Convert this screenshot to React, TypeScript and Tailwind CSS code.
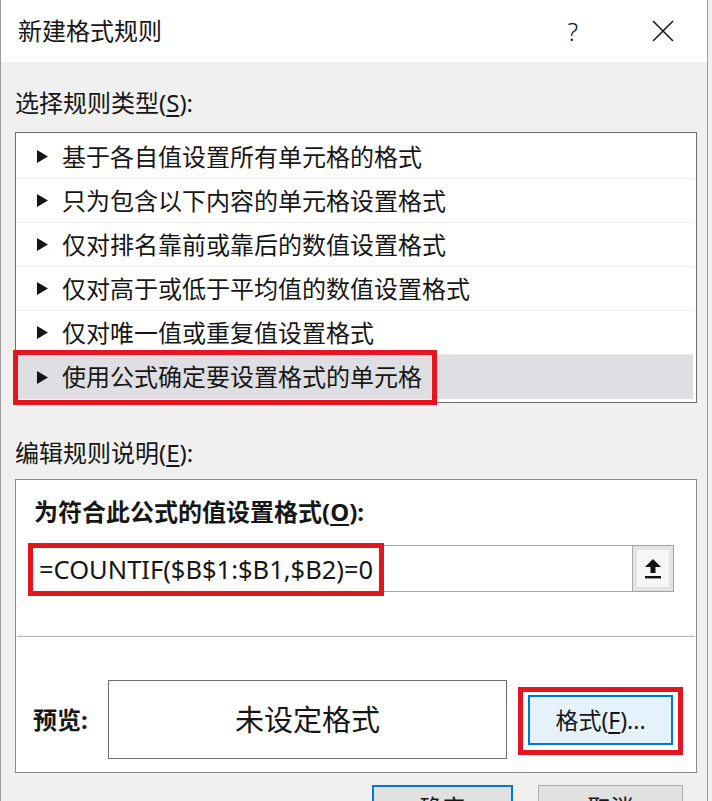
import React from "react";

const rules = [
  "基于各自值设置所有单元格的格式",
  "只为包含以下内容的单元格设置格式",
  "仅对排名靠前或靠后的数值设置格式",
  "仅对高于或低于平均值的数值设置格式",
  "仅对唯一值或重复值设置格式",
  "使用公式确定要设置格式的单元格",
];

function Triangle() {
  return (
    <svg width="11" height="13" viewBox="0 0 11 13" className="shrink-0">
      <polygon points="0,0 11,6.5 0,13" fill="#141414" />
    </svg>
  );
}

function CloseIcon() {
  return (
    <svg width="22" height="22" viewBox="0 0 22 22">
      <path d="M1 1 L21 21 M21 1 L1 21" stroke="#1a1a1a" strokeWidth="1.6" fill="none" />
    </svg>
  );
}

function UploadIcon() {
  return (
    <svg width="18" height="22" viewBox="0 0 18 22">
      <polygon points="9,1 17,9 11.5,9 11.5,15 6.5,15 6.5,9 1,9" fill="#111" />
      <rect x="1" y="18" width="16" height="2.4" fill="#111" />
    </svg>
  );
}

export default function App() {
  return (
    <div className="w-[712px] h-[801px] overflow-hidden bg-[#f0f0f0] font-['Noto_Sans','Noto_Sans_CJK_SC',sans-serif] text-[#161616]">
      <div className="w-[708px] h-full border-l border-r border-[#9a9a9a] flex flex-col">
        {/* Title bar */}
        <div className="h-[62px] shrink-0 bg-white flex items-center pl-[17px]">
          <span className="text-[24px] leading-[28px]">新建格式规则</span>
          <span className="ml-auto mr-[74px] text-[25px] leading-[28px] font-light">?</span>
          <span className="mr-[33px] flex items-center">
            <CloseIcon />
          </span>
        </div>

        {/* Body */}
        <div className="pl-[14px] pr-[10px]">
          <div className="pt-[27px] text-[24px] leading-[28px]">
            选择规则类型(<span className="underline underline-offset-[3px]">S</span>):
          </div>

          <div className="mt-[15px] bg-white border border-[#6e6e6e] pt-[2px] pb-[3px]">
            {rules.map((rule, i) => {
              const selected = i === rules.length - 1;
              return (
                <div
                  key={rule}
                  className={
                    selected
                      ? "relative h-[44px] flex items-center bg-[#dfdfe3] mr-[3px]"
                      : "h-[44px] flex items-center border-b border-[#eeeeee] mr-[3px]"
                  }
                >
                  <div className="ml-[21px]">
                    <Triangle />
                  </div>
                  <span className="ml-[14px] text-[24px] leading-[28px]">{rule}</span>
                  {selected && (
                    <div className="absolute left-[-3px] top-[-5px] w-[424px] h-[55px] border-[5px] border-[#e2161e]" />
                  )}
                </div>
              );
            })}
          </div>

          <div className="mt-[36px] text-[24px] leading-[28px]">
            编辑规则说明(<span className="underline underline-offset-[3px]">E</span>):
          </div>

          <div className="mt-[12px] bg-white border border-[#8a8a8a] h-[294px]">
            <div className="pt-[18px] pl-[18px] text-[24px] leading-[28px] font-bold">
              为符合此公式的值设置格式(<span className="underline underline-offset-[3px]">O</span>):
            </div>

            <div className="relative mt-[19px] ml-[14px] mr-[22px] h-[47px] flex">
              <div className="flex-1 border border-[#a8a8a8] flex items-center pl-[8px] text-[25.5px] leading-[30px]">
                =COUNTIF($B$1:$B1,$B2)=0
              </div>
              <div className="w-[41px] border border-[#a3a3a3] border-l-0 bg-[#e3e3e3] p-[4px]">
                <div className="w-full h-full bg-[#f6f6f6] flex items-center justify-center">
                  <UploadIcon />
                </div>
              </div>
              <div className="absolute left-[-2px] top-[-2px] w-[356px] h-[53px] border-[5px] border-[#e2161e]" />
            </div>

            <div className="mt-[44px] mx-[1px] h-px bg-[#b4b4b4]" />

            <div className="mt-[43px] flex items-center">
              <span className="ml-[17px] w-[58px] text-[24px] leading-[28px] font-bold">预览:</span>
              <div className="ml-[17px] w-[399px] h-[79px] border border-[#6e6e6e] flex items-center justify-center text-[29px] leading-[34px]">
                未设定格式
              </div>
              <div className="relative ml-[21px] w-[145px] h-[50px] border-2 border-[#0078d7] bg-[#e5f1fb] flex items-center justify-center text-[23px] leading-[28px]">
                格式(<span className="underline underline-offset-[3px]">F</span>)...
                <div className="absolute left-[-12px] top-[-10px] w-[165px] h-[68px] border-[5px] border-[#e2161e]" />
              </div>
            </div>
          </div>

          <div className="mt-[12px] flex justify-end pr-[14px] gap-[25px]">
            <div className="w-[141px] h-[44px] border-2 border-[#0078d7] bg-[#e1e1e1] flex items-center justify-center text-[23px] leading-[28px]">
              确定
            </div>
            <div className="w-[145px] h-[44px] border border-[#adadad] bg-[#e1e1e1] flex items-center justify-center text-[23px] leading-[28px]">
              取消
            </div>
          </div>
        </div>
      </div>
    </div>
  );
}
